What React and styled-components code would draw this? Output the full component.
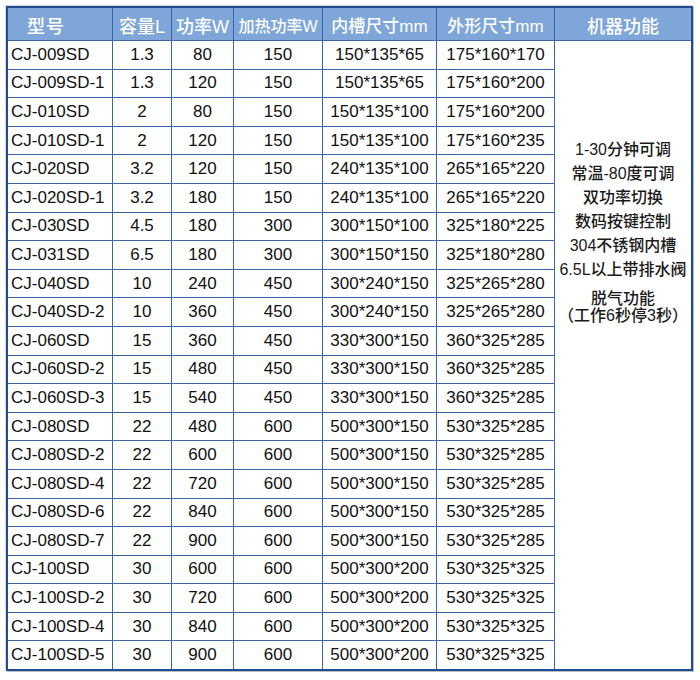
import React from "react";
import styled, { createGlobalStyle } from "styled-components";

const rows = [
	["CJ-009SD", "1.3", "80", "150", "150*135*65", "175*160*170"],
	["CJ-009SD-1", "1.3", "120", "150", "150*135*65", "175*160*200"],
	["CJ-010SD", "2", "80", "150", "150*135*100", "175*160*200"],
	["CJ-010SD-1", "2", "120", "150", "150*135*100", "175*160*235"],
	["CJ-020SD", "3.2", "120", "150", "240*135*100", "265*165*220"],
	["CJ-020SD-1", "3.2", "180", "150", "240*135*100", "265*165*220"],
	["CJ-030SD", "4.5", "180", "300", "300*150*100", "325*180*225"],
	["CJ-031SD", "6.5", "180", "300", "300*150*150", "325*180*280"],
	["CJ-040SD", "10", "240", "450", "300*240*150", "325*265*280"],
	["CJ-040SD-2", "10", "360", "450", "300*240*150", "325*265*280"],
	["CJ-060SD", "15", "360", "450", "330*300*150", "360*325*285"],
	["CJ-060SD-2", "15", "480", "450", "330*300*150", "360*325*285"],
	["CJ-060SD-3", "15", "540", "450", "330*300*150", "360*325*285"],
	["CJ-080SD", "22", "480", "600", "500*300*150", "530*325*285"],
	["CJ-080SD-2", "22", "600", "600", "500*300*150", "530*325*285"],
	["CJ-080SD-4", "22", "720", "600", "500*300*150", "530*325*285"],
	["CJ-080SD-6", "22", "840", "600", "500*300*150", "530*325*285"],
	["CJ-080SD-7", "22", "900", "600", "500*300*150", "530*325*285"],
	["CJ-100SD", "30", "600", "600", "500*300*200", "530*325*325"],
	["CJ-100SD-2", "30", "720", "600", "500*300*200", "530*325*325"],
	["CJ-100SD-4", "30", "840", "600", "500*300*200", "530*325*325"],
	["CJ-100SD-5", "30", "900", "600", "500*300*200", "530*325*325"],
];

const headers = [
	{ label: "型号", size: 18, shift: 28 },
	{ label: "容量L", size: 18 },
	{ label: "功率W", size: 18 },
	{ label: "加热功率W", size: 16 },
	{ label: "内槽尺寸mm", size: 17 },
	{ label: "外形尺寸mm", size: 17 },
	{ label: "机器功能", size: 18 },
];

const features = [
	"1-30分钟可调",
	"常温-80度可调",
	"双功率切换",
	"数码按键控制",
	"304不锈钢内槽",
	"6.5L以上带排水阀",
];

const GlobalStyle = createGlobalStyle`
	body {
		margin: 0;
		background: #ffffff;
		font-family: "Liberation Sans", "Noto Sans CJK SC", Arial, sans-serif;
	}
`;

const Page = styled.div`
	width: 700px;
	height: 680px;
	padding: 6px 0 0 6px;
	box-sizing: border-box;
`;

const Table = styled.div`
	display: grid;
	grid-template-columns: 104px 58px 61px 88px 113px 117px 136px;
	grid-template-rows: 32px repeat(22, 27.6px);
	gap: 1px;
	width: 687px;
	box-sizing: border-box;
	background: #3a66a8;
	border: 2px solid #1f4d8f;
	box-shadow: 1px 1px 0 #b9bfc8, -1px -1px 0 #d6dae0;
`;

const HeadCell = styled.div`
	display: flex;
	align-items: center;
	justify-content: center;
	background: #7ea6d8;
	color: #ffffff;
	font-size: ${({ size }) => size}px;
	font-weight: 500;
	white-space: nowrap;
	padding: 1px ${({ shift }) => shift || 0}px 0 0;
	letter-spacing: ${({ shift }) => (shift ? "1px" : "0")};
`;

const Cell = styled.div`
	display: flex;
	align-items: center;
	justify-content: ${({ left }) => (left ? "flex-start" : "center")};
	padding-left: ${({ left }) => (left ? "3px" : "0")};
	background: #ffffff;
	color: #111111;
	font-size: 17px;
	white-space: nowrap;
`;

const FeatureCell = styled.div`
	grid-column: 7;
	grid-row: 2 / span 22;
	background: #ffffff;
	display: flex;
	flex-direction: column;
	align-items: center;
	padding-top: 97px;
	color: #1a1a1a;
	font-size: 16px;
	font-weight: 500;
`;

const FeatureLine = styled.div`
	line-height: 24px;
	white-space: nowrap;
`;

const Note = styled.div`
	margin-top: 8px;
	display: flex;
	flex-direction: column;
	align-items: center;
	line-height: 17px;
`;

export default function App() {
	return (
		<Page>
			<GlobalStyle />
			<Table>
				{headers.map((h) => (
					<HeadCell key={h.label} size={h.size} shift={h.shift}>
						{h.label}
					</HeadCell>
				))}
				{rows.map((r, i) => (
					<React.Fragment key={r[0]}>
						{r.map((v, j) => (
							<Cell key={j} left={j === 0} style={{ gridRow: i + 2, gridColumn: j + 1 }}>
								{v}
							</Cell>
						))}
					</React.Fragment>
				))}
				<FeatureCell>
					{features.map((f) => (
						<FeatureLine key={f}>{f}</FeatureLine>
					))}
					<Note>
						<span>脱气功能</span>
						<span>（工作6秒停3秒）</span>
					</Note>
				</FeatureCell>
			</Table>
		</Page>
	);
}
